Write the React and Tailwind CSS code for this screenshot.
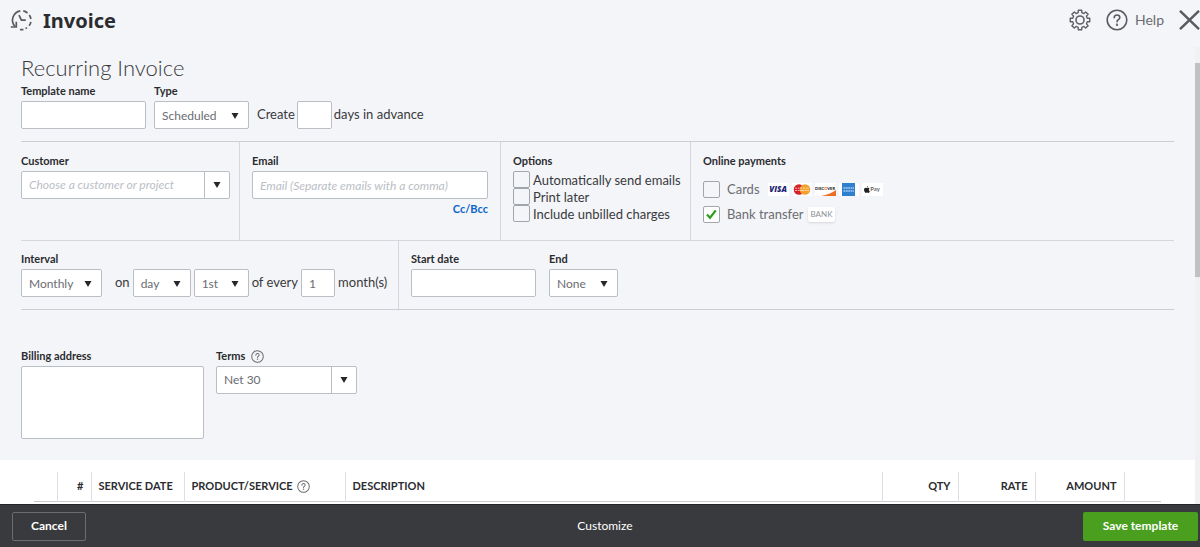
import React from 'react';

const FONT = "font-['Lato','Liberation_Sans',sans-serif]";
const BOX = 'rounded-[2px] border border-[#babec5] bg-white';
const LABEL = 'flex h-4 items-center text-[11px] font-bold leading-4 text-[#2b2c30]';

function Caret({ className = '' }) {
  return (
    <svg className={className} width="8" height="6" viewBox="0 0 8 6" aria-hidden="true">
      <path d="M0.500 0h7L4 6z" fill="#26272a" />
    </svg>
  );
}

function HelpMark({ size, stroke, className = '' }) {
  return (
    <svg className={className} width={size} height={size} viewBox="0 0 22 22" fill="none" stroke="currentColor" strokeWidth={stroke} aria-hidden="true">
      <circle cx="11" cy="11" r="9.8" />
      <path d="M8.2 8.8c0-1.7 1.2-2.8 2.8-2.8s2.8 1 2.8 2.6c0 2.1-2.8 2.1-2.8 4.2" strokeLinecap="round" />
      <circle cx="11" cy="15.7" r="0.4" fill="currentColor" />
    </svg>
  );
}

function Field({ label, htmlFor, children, className = '' }) {
  return (
    <div className={`flex flex-col gap-0.5 ${className}`}>
      <label htmlFor={htmlFor} className={LABEL}>{label}</label>
      {children}
    </div>
  );
}

function Select({ id, label, options, className = '' }) {
  return (
    <div className={`relative ${className}`}>
      <select id={id} aria-label={label} className={`h-7 w-full appearance-none pl-[7px] pt-[2px] text-xs text-[#6b6c72] ${BOX}`}>
        {options.map((o) => <option key={o}>{o}</option>)}
      </select>
      <Caret className="pointer-events-none absolute right-[10px] top-3" />
    </div>
  );
}

function Combo({ id, className, inputClass = '', ...rest }) {
  return (
    <div className={`flex overflow-hidden ${BOX} ${className}`}>
      <input id={id} className={`min-w-0 flex-1 px-[7px] text-xs text-[#6b6c72] outline-none ${inputClass}`} {...rest} />
      <button type="button" aria-label="Open list" className="flex w-[25px] items-center justify-center border-l border-[#babec5]">
        <Caret />
      </button>
    </div>
  );
}

function Check({ id, label, checked, soft, children }) {
  return (
    <div className="flex items-center">
      <span className="relative flex">
        <input id={id} type="checkbox" defaultChecked={checked} className="peer size-[17px] appearance-none rounded-[2px] border border-[#a2a5ab] bg-[#f4f5f8] checked:bg-white" />
        <svg className="pointer-events-none absolute left-[3px] top-[3px] hidden peer-checked:block" width="11" height="11" viewBox="0 0 11 11" fill="none" stroke="#2ca01c" strokeWidth="2.2" aria-hidden="true">
          <path d="M1 5.6l3 3.2L9.8 1.4" />
        </svg>
      </span>
      <label htmlFor={id} className={soft ? 'pl-[7px] text-[13px] text-[#6b6c72]' : 'pl-[3px] text-[13px] text-[#393a3d]'}>{label}</label>
      {children}
    </div>
  );
}

function CardLogos() {
  return (
    <div className="flex items-center gap-[3px] pl-2">
      <span className="flex h-[13px] w-[21px] items-center justify-center bg-white font-['Open_Sans',sans-serif] text-[8px] font-extrabold italic text-[#1a2473]">VISA</span>
      <svg width="20" height="13" viewBox="0 0 20 13" aria-label="MasterCard" role="img">
        <rect width="20" height="13" fill="#fff" />
        <circle cx="7" cy="6.5" r="5.3" fill="#d6202c" />
        <circle cx="13" cy="6.5" r="5.3" fill="#f4a02c" />
        <path d="M3 5.200h7M3 7.500h7M11 5.200h6M10 7.500h7" stroke="#fff" strokeWidth="0.9" strokeDasharray="2 0.7" opacity="0.7" />
      </svg>
      <span className="relative flex h-[13px] w-[21px] justify-center overflow-hidden bg-white text-[4px] font-black leading-[11px] text-[#222]">
        <svg className="absolute inset-0" width="21" height="13" viewBox="0 0 21 13" aria-hidden="true">
          <path d="M21 7v6H6c6-1 11-3 15-6z" fill="#ee6d25" />
        </svg>
        <span className="relative">DISC<span className="text-[#ee6d25]">O</span>VER</span>
      </span>
      <span className="flex w-5 justify-center bg-white">
        <svg width="13" height="13" viewBox="0 0 13 13" aria-label="American Express" role="img">
          <rect width="13" height="13" fill="#2f7fd0" />
          <path d="M1.5 5h10.500M1.5 8h10.500" stroke="#fff" strokeWidth="1.7" strokeDasharray="1.8 0.6" opacity="0.6" />
        </svg>
      </span>
      <span className="flex h-[13px] w-[21px] items-center justify-center bg-white text-[6px] text-[#333]">
        <svg width="6" height="7" viewBox="0 0 12 14" fill="#222" aria-hidden="true">
          <path d="M8.2 0c.1 1.500-1 3-2.400 3.100C5.600 1.700 6.900.2 8.200 0zM6 4c.7 0 1.500-.7 2.700-.7 1 0 2 .5 2.600 1.400-2.400 1.400-2 4.700.4 5.600-.6 1.700-1.700 3.500-3 3.500-.9 0-1.300-.6-2.500-.6s-1.600.6-2.500.6C2 13.800 0 10.400 0 7.600 0 5 1.600 3.400 3.400 3.400 4.500 3.400 5.300 4 6 4z" />
        </svg>
        Pay
      </span>
    </div>
  );
}

const COLUMNS = [
  { name: '', width: 'w-[23px]' },
  { name: '#', width: 'w-[34px]', align: 'text-right' },
  { name: 'SERVICE DATE', width: 'w-[93px]' },
  { name: 'PRODUCT/SERVICE', width: 'w-[161px]', help: true },
  { name: 'DESCRIPTION', width: '' },
  { name: 'QTY', width: 'w-[76px]', align: 'text-right' },
  { name: 'RATE', width: 'w-[77px]', align: 'text-right' },
  { name: 'AMOUNT', width: 'w-[89px]', align: 'text-right' },
  { name: '', width: 'w-[37px]' },
];

const TOOTH_ANGLES = [0, 45, 90, 135, 180, 225, 270, 315];

function point(radius, degrees) {
  const a = (degrees * Math.PI) / 180;
  return `${(11 + radius * Math.sin(a)).toFixed(2)} ${(11 - radius * Math.cos(a)).toFixed(2)}`;
}

const GEAR = `M${TOOTH_ANGLES.map((a) => [
  point(7.5, a - 14), point(9.9, a - 10), point(9.9, a + 10), point(7.5, a + 14),
].join('L')).join('L')}Z`;

function Header() {
  return (
    <header className="flex h-[47px] shrink-0 items-start justify-between pl-[10px] pt-[6px] text-[#6b6c72]">
      <div className="flex h-7 items-center gap-[10px]">
        <svg width="23" height="24" viewBox="0 0 23 24" fill="none" stroke="#5a5b61" strokeWidth="1.700" aria-hidden="true">
          <path d="M5 18.500A9.500 9.500 0 0 1 10.300 2.800" />
          <path d="M13.300 2.900a9.500 9.500 0 0 1 4.200 2.100M19.300 7a9.500 9.500 0 0 1 1.600 4M20.900 13.800a9.500 9.500 0 0 1-1.800 4M17 19.600a9.500 9.500 0 0 1-1.500 1M13.500 21.500a9.500 9.500 0 0 1-3.500 0" />
          <path d="M.8 19h5.500v-5.200" />
          <path d="M9 7.200l2.400 5h4.400" />
        </svg>
        <h1 className="pt-0.5 font-['Noto_Sans',sans-serif] text-xl font-bold text-[#2b2c30]">Invoice</h1>
      </div>
      <div className="flex h-7 items-center">
        <button type="button" aria-label="Settings" className="mr-[15px]">
          <svg width="22" height="22" viewBox="0 0 22 22" fill="none" stroke="#5f6066" strokeWidth="1.400" strokeLinejoin="round" aria-hidden="true">
            <path d={GEAR} />
            <circle cx="11" cy="11" r="4" strokeWidth="1.600" />
          </svg>
        </button>
        <button type="button" className="mr-[15px] flex items-center gap-[7px] text-sm">
          <HelpMark size={22} stroke={1.6} className="text-[#5a5b61]" />
          Help
        </button>
        <button type="button" aria-label="Close">
          <svg className="block" width="21" height="20" viewBox="0 0 21 20" stroke="#5a5b61" strokeWidth="2.400" aria-hidden="true">
            <path d="M1 .8L20 19.200M20 .8L1 19.200" />
          </svg>
        </button>
      </div>
    </header>
  );
}

export default function App() {
  return (
    <div className={`flex h-screen flex-col bg-[#f4f5f8] text-[13px] text-[#393a3d] ${FONT}`}>
      <Header />
      <div className="flex min-h-0 flex-1">
        <main className="min-w-0 flex-1 overflow-hidden">
          <div className="px-[21px]">
            <h2 className="pt-[7px] text-[22px] font-light leading-7 text-[#393a3d]">Recurring Invoice</h2>
            <section className="flex items-end border-b border-[#cbced3] pb-3 pt-px">
              <Field label="Template name" htmlFor="template" className="mr-2 w-[125px]">
                <input id="template" className={`h-7 px-[7px] ${BOX}`} />
              </Field>
              <Field label="Type" htmlFor="type" className="mr-2 w-[95px]">
                <Select id="type" options={['Scheduled', 'Reminder', 'Unscheduled']} />
              </Field>
              <div className="flex items-center gap-0.5">
                <label htmlFor="advance">Create</label>
                <input id="advance" className={`h-7 w-[35px] px-[7px] ${BOX}`} />
                <span>days in advance</span>
              </div>
            </section>

            <section className="flex h-[99px] border-b border-[#d4d7dc]">
              <Field label="Customer" htmlFor="customer" className="w-[219px] border-r border-[#d4d7dc] pr-[9px] pt-[11px]">
                <Combo id="customer" className="h-7" placeholder="Choose a customer or project" inputClass="placeholder:italic placeholder:text-[#babec5]" />
              </Field>
              <div className="w-[261px] border-r border-[#d4d7dc] px-3 pt-[11px]">
                <Field label="Email" htmlFor="email">
                  <input id="email" placeholder="Email (Separate emails with a comma)" className={`h-7 px-[7px] text-xs placeholder:italic placeholder:text-[#babec5] ${BOX}`} />
                </Field>
                <a href="#cc" className="block pt-0.5 text-right text-[11px] font-bold leading-4 text-[#0b66c9]">Cc/Bcc</a>
              </div>
              <fieldset className="w-[190px] border-r border-[#d4d7dc] pl-3 pt-[11px]">
                <legend className="contents"><span className={LABEL}>Options</span></legend>
                <div className="flex flex-col pt-0.5 leading-4">
                  <Check id="auto" label="Automatically send emails" />
                  <Check id="print" label="Print later" />
                  <Check id="unbilled" label="Include unbilled charges" />
                </div>
              </fieldset>
              <fieldset className="pl-3 pt-[11px]">
                <legend className="contents"><span className={LABEL}>Online payments</span></legend>
                <div className="flex flex-col gap-[5px] pt-[10px] leading-5">
                  <Check id="cards" label="Cards" soft><CardLogos /></Check>
                  <Check id="bank" label="Bank transfer" soft checked>
                    <span className="ml-1 rounded-[2px] bg-white px-[3px] text-[8px] leading-[15px] text-[#8d9096] shadow-sm">BANK</span>
                  </Check>
                </div>
              </fieldset>
            </section>

            <section className="flex border-b border-[#cbced3]">
              <div className="flex w-[378px] items-end border-r border-[#d4d7dc] pb-3 pt-[10px]">
                <Field label="Interval" htmlFor="interval" className="mr-[13px] w-[81px]">
                  <Select id="interval" options={['Monthly', 'Daily', 'Weekly', 'Yearly']} />
                </Field>
                <div className="flex items-center gap-[3px] whitespace-nowrap">
                  <span>on</span>
                  <Select label="Day type" options={['day', 'first']} className="w-[58px]" />
                  <Select label="Day of month" options={['1st', '2nd', '3rd']} className="w-[55px]" />
                  <label htmlFor="months">of every</label>
                  <input id="months" defaultValue="1" className={`h-7 w-[34px] px-[7px] text-xs text-[#6b6c72] ${BOX}`} />
                  <span>month(s)</span>
                </div>
              </div>
              <div className="flex gap-[13px] pb-3 pl-3 pt-[10px]">
                <Field label="Start date" htmlFor="start" className="w-[125px]">
                  <input id="start" className={`h-7 px-[7px] ${BOX}`} />
                </Field>
                <Field label="End" htmlFor="end" className="w-[69px]">
                  <Select id="end" options={['None', 'By', 'After']} />
                </Field>
              </div>
            </section>

            <section className="flex items-start gap-3 pb-[21px] pt-[38px]">
              <Field label="Billing address" htmlFor="billing" className="w-[183px]">
                <textarea id="billing" className={`h-[73px] resize-none p-[7px] ${BOX}`} />
              </Field>
              <Field
                htmlFor="terms"
                label={<>Terms<HelpMark size={13} stroke={1.7} className="ml-1.5 text-[#6b6c72]" /></>}
                className="w-[141px]"
              >
                <Combo id="terms" className="h-7" defaultValue="Net 30" />
              </Field>
            </section>
          </div>

          <section className="bg-white px-[34px] pt-3">
            <table className="w-full table-fixed border-collapse">
              <thead>
                <tr className="h-[29px] border-b border-[#c7cacf]">
                  {COLUMNS.map((c, i) => (
                    <th key={i} scope="col" className={`border-l border-[#dcdee2] px-[7px] py-0 text-[11px] font-bold text-[#2b2c30] first:border-l-0 ${c.width} ${c.align || 'text-left'}`}>
                      {c.help ? (
                        <span className="flex items-center gap-1">{c.name}<HelpMark size={13} stroke={1.7} className="text-[#6b6c72]" /></span>
                      ) : c.name}
                    </th>
                  ))}
                </tr>
              </thead>
            </table>
            <div className="h-20" />
          </section>
        </main>
        <div className="w-[5px] shrink-0 bg-[#f1f1f1] pt-4" aria-hidden="true">
          <div className="h-[214px] bg-[#c1c1c1]" />
        </div>
      </div>
      <footer className="grid h-[43px] shrink-0 grid-cols-3 items-center border-t border-[#232427] bg-[#393a3d] pl-3 pr-0.5 text-white">
        <button type="button" className="h-[29px] w-[74px] justify-self-start rounded-[2px] border border-[#6b6c72] text-xs font-bold">Cancel</button>
        <button type="button" className="justify-self-center text-xs">Customize</button>
        <button type="button" className="h-[29px] w-[115px] justify-self-end rounded-[2px] bg-[#4a9f1e] text-xs font-bold">Save template</button>
      </footer>
    </div>
  );
}
